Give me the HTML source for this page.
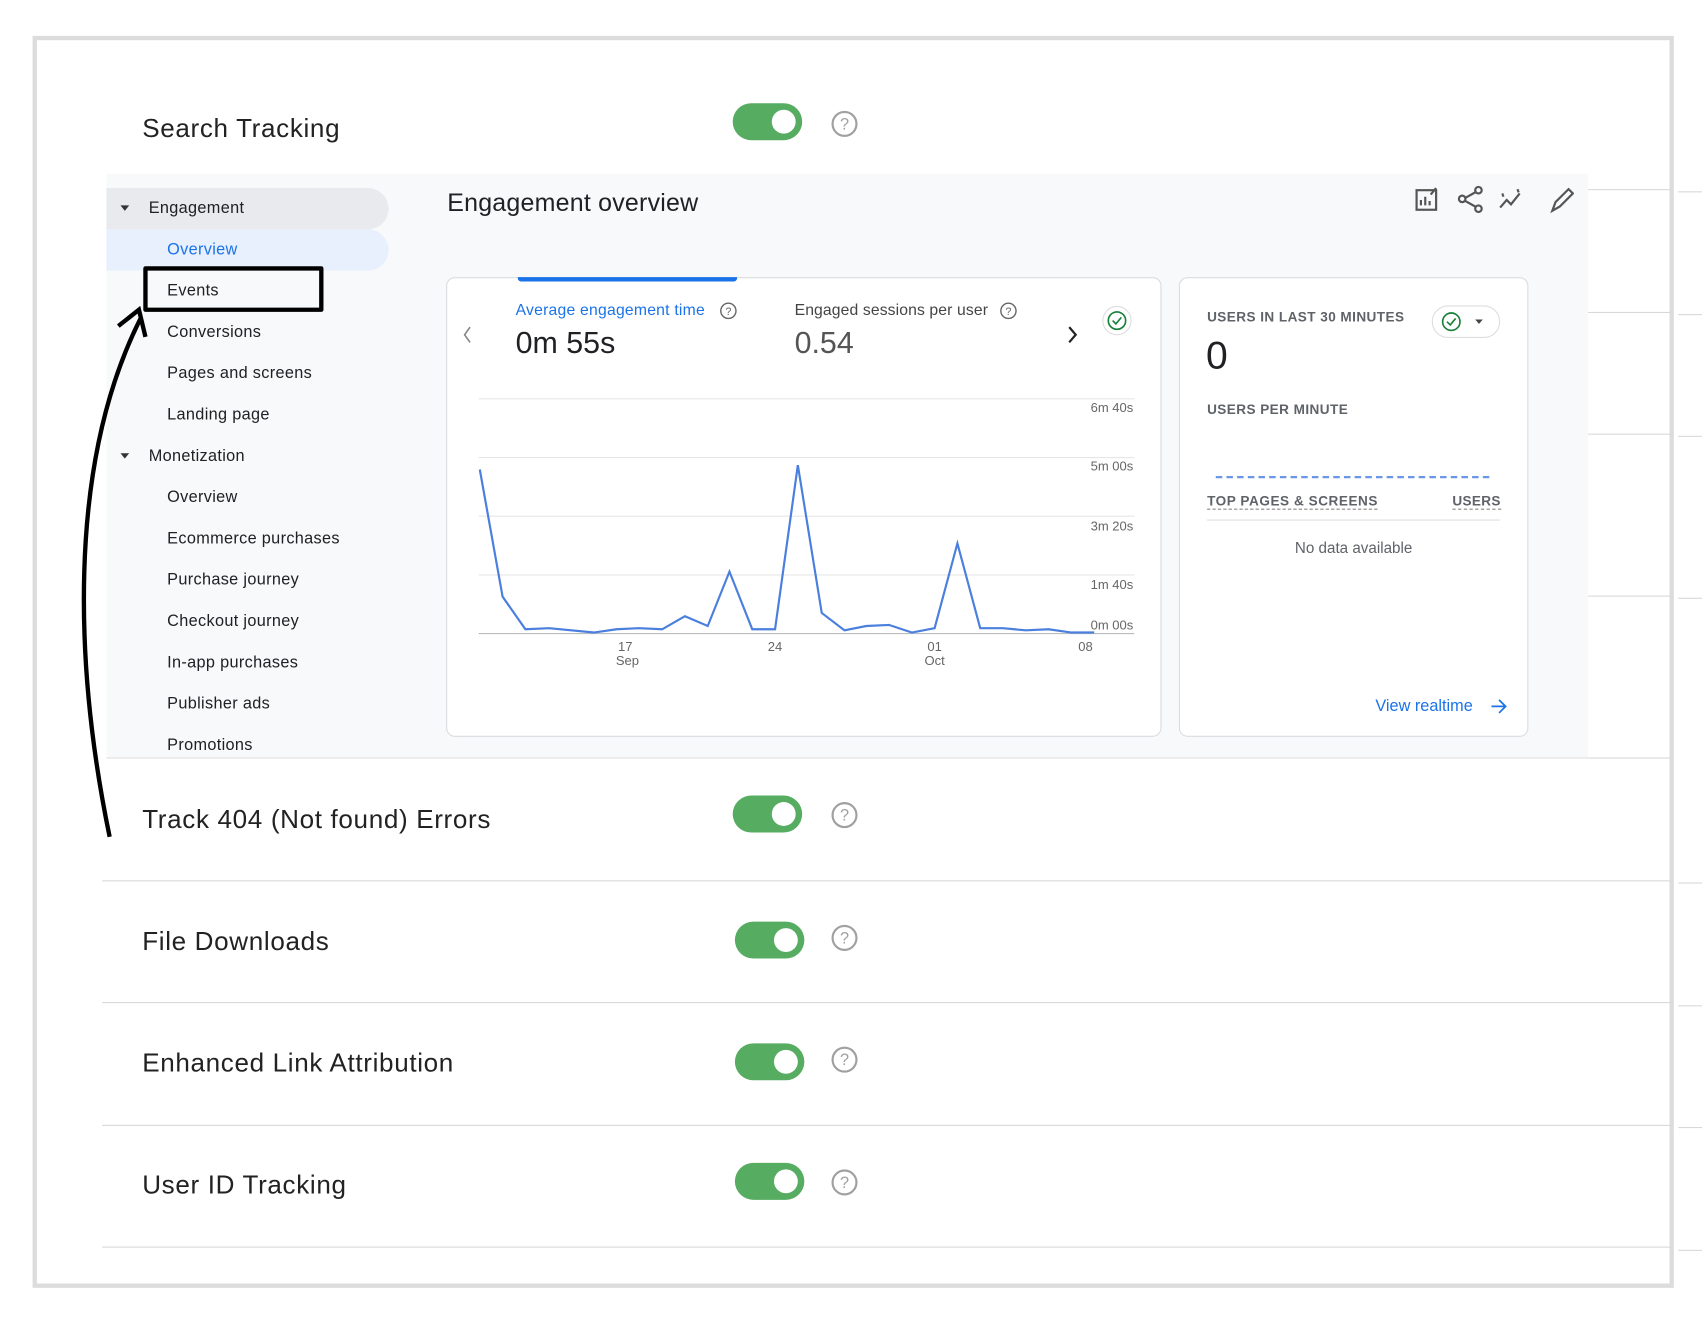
<!DOCTYPE html>
<html><head><meta charset="utf-8"><style>
html,body{margin:0;padding:0;background:#fff;width:1702px;height:1327px;overflow:hidden}
#w{position:absolute;left:0;top:0;width:1568px;height:1222px;transform:scale(1.0855,1.0868);transform-origin:0 0;font-family:"Liberation Sans",sans-serif}
.a{position:absolute}
.lbl{position:absolute;left:131px;font-size:24px;color:#222;letter-spacing:0.6px}
.tg{position:absolute;width:64px;height:34px;border-radius:17px;background:#56ac60}
.tg:after{content:"";position:absolute;right:6px;top:6px;width:22px;height:22px;border-radius:50%;background:#fff}
.hl{position:absolute;height:1px;background:#d8d8d8}
.side{position:absolute;font-size:15px;color:#202124;letter-spacing:0.3px}
</style></head><body><div id="w">
<div class="a" style="left:30px;top:33px;width:1504px;height:1144px;border:4px solid #dcdcdc"></div>
<div class="hl" style="left:94px;top:810px;width:1446px"></div>
<div class="hl" style="left:94px;top:922px;width:1446px"></div>
<div class="hl" style="left:94px;top:1035px;width:1446px"></div>
<div class="hl" style="left:94px;top:1147px;width:1446px"></div>
<div class="hl" style="left:1463px;top:174px;width:77px"></div>
<div class="hl" style="left:1463px;top:287px;width:77px"></div>
<div class="hl" style="left:1463px;top:399px;width:77px"></div>
<div class="hl" style="left:1463px;top:548px;width:77px"></div>
<div class="hl" style="left:1463px;top:697px;width:77px"></div>
<div class="hl" style="left:1546px;top:176px;width:22px"></div>
<div class="hl" style="left:1546px;top:289px;width:22px"></div>
<div class="hl" style="left:1546px;top:401px;width:22px"></div>
<div class="hl" style="left:1546px;top:550px;width:22px"></div>
<div class="hl" style="left:1546px;top:812px;width:22px"></div>
<div class="hl" style="left:1546px;top:925px;width:22px"></div>
<div class="hl" style="left:1546px;top:1037px;width:22px"></div>
<div class="hl" style="left:1546px;top:1150px;width:22px"></div>

<div class="lbl" style="top:105px">Search Tracking</div>
<div class="tg" style="left:675px;top:95px"></div>
<div class="lbl" style="top:741px">Track 404 (Not found) Errors</div>
<div class="tg" style="left:675px;top:732px"></div>
<div class="lbl" style="top:853px">File Downloads</div>
<div class="tg" style="left:677px;top:848px"></div>
<div class="lbl" style="top:965px">Enhanced Link Attribution</div>
<div class="tg" style="left:677px;top:960px"></div>
<div class="lbl" style="top:1077px">User ID Tracking</div>
<div class="tg" style="left:677px;top:1070px"></div>
<svg class="a" style="left:0;top:0" width="1568" height="1222">
<g fill="none" stroke="#a0a0a0" stroke-width="2">
<circle cx="778" cy="114" r="11"/><circle cx="778" cy="750" r="11"/><circle cx="778" cy="863" r="11"/><circle cx="778" cy="975" r="11"/><circle cx="778" cy="1088" r="11"/>
</g>
<g fill="#a0a0a0" font-size="15" text-anchor="middle" font-family="Liberation Sans"><text x="778" y="119">?</text><text x="778" y="755">?</text><text x="778" y="868">?</text><text x="778" y="980">?</text><text x="778" y="1093">?</text></g>
</svg>

<div class="a" style="left:98px;top:160px;width:1365px;height:537px;background:#f8f9fa;border-bottom:1px solid #e0e0e0"></div>
<div class="a" style="left:98px;top:173px;width:260px;height:38px;background:#e8eaed;border-radius:0 19px 19px 0"></div>
<div class="a" style="left:98px;top:211px;width:260px;height:38px;background:#e8f0fe;border-radius:0 19px 19px 0"></div>
<div class="a" style="left:111px;top:189px;border:4px solid transparent;border-top:5px solid #333"></div>
<div class="a" style="left:111px;top:417px;border:4px solid transparent;border-top:5px solid #333"></div>
<div class="side" style="left:137px;top:183px">Engagement</div>
<div class="side" style="left:154px;top:221px;color:#1a73e8">Overview</div>
<div class="side" style="left:154px;top:259px">Events</div>
<div class="side" style="left:154px;top:297px">Conversions</div>
<div class="side" style="left:154px;top:335px">Pages and screens</div>
<div class="side" style="left:154px;top:373px">Landing page</div>
<div class="side" style="left:137px;top:411px">Monetization</div>
<div class="side" style="left:154px;top:449px">Overview</div>
<div class="side" style="left:154px;top:487px">Ecommerce purchases</div>
<div class="side" style="left:154px;top:525px">Purchase journey</div>
<div class="side" style="left:154px;top:563px">Checkout journey</div>
<div class="side" style="left:154px;top:601px">In-app purchases</div>
<div class="side" style="left:154px;top:639px">Publisher ads</div>
<div class="side" style="left:154px;top:677px">Promotions</div>
<div class="a" style="left:132px;top:245px;width:158px;height:34px;border:4px solid #000;border-radius:2px"></div>

<div class="a" style="left:412px;top:173px;font-size:23px;color:#202124;letter-spacing:0.2px">Engagement overview</div>
<svg class="a" style="left:1300px;top:170px" width="150" height="28" fill="none" stroke="#555" stroke-width="2">
<rect x="5" y="5" width="18" height="18"/><path d="M9 19v-5M13 19v-8M17 19v-4M18 9l5-6"/>
<circle cx="62" cy="5" r="3"/><circle cx="47" cy="13" r="3"/><circle cx="62" cy="22" r="3"/><path d="M50 12l9-5M50 15l9 5"/>
<path d="M82 21l6-7 4 4 8-10M84 8l1 3M98 4l1 3"/>
<path d="M130 24l3-8 12-12 4 4-12 12z"/>
</svg>

<div class="a" style="left:411px;top:255px;width:657px;height:421px;background:#fff;border:1px solid #dadce0;border-radius:8px"></div>
<div class="a" style="left:477px;top:255px;width:202px;height:4px;background:#1a73e8;border-radius:0 0 3px 3px"></div>
<div class="a" style="left:475px;top:278px;font-size:14.5px;color:#1a73e8;letter-spacing:0.2px">Average engagement time</div>
<div class="a" style="left:475px;top:300px;font-size:28px;color:#202124">0m 55s</div>
<div class="a" style="left:732px;top:278px;font-size:14.5px;color:#444;letter-spacing:0.1px">Engaged sessions per user</div>
<div class="a" style="left:732px;top:300px;font-size:28px;color:#555">0.54</div>
<svg class="a" style="left:411px;top:255px" width="660" height="420">
<g fill="none" stroke="#666" stroke-width="1.3"><circle cx="260" cy="31" r="7"/><circle cx="518" cy="31" r="7"/></g>
<g font-size="10" fill="#666" text-anchor="middle" font-family="Liberation Sans"><text x="260" y="35">?</text><text x="518" y="35">?</text></g>
<path d="M22 46l-5 7 5 7" stroke="#888" stroke-width="1.5" fill="none"/>
<path d="M574 46l6 7-6 7" stroke="#222" stroke-width="2" fill="none"/>
<circle cx="618" cy="40" r="13" fill="#fff" stroke="#ddd"/><circle cx="618" cy="40" r="8" fill="none" stroke="#188038" stroke-width="1.5"/><path d="M614 40l3 3 5-6" stroke="#188038" stroke-width="1.5" fill="none"/>
<g stroke="#e6e6e6"><path d="M30 112H634M30 166H634M30 220H634M30 274H634"/><path d="M30 328H634" stroke="#bbb"/></g>
<g font-size="12" fill="#666" font-family="Liberation Sans" text-anchor="end"><text x="633" y="124">6m 40s</text><text x="633" y="178">5m 00s</text><text x="633" y="233">3m 20s</text><text x="633" y="287">1m 40s</text><text x="633" y="324">0m 00s</text></g>
<g font-size="12" fill="#666" font-family="Liberation Sans" text-anchor="middle"><text x="165" y="344">17</text><text x="167" y="357">Sep</text><text x="303" y="344">24</text><text x="450" y="344">01</text><text x="450" y="357">Oct</text><text x="589" y="344">08</text></g>
<polyline fill="none" stroke="#4a7fde" stroke-width="2" points="31,177 52,294 73,324 95,323 136,327 157,324 178,323 199,324 220,312 241,321 261,271 282,324 303,324 324,173 346,309 367,325 387,321 408,320 429,327 450,323 471,245 492,323 513,323 534,325 555,324 576,327 597,327"/>
</svg>

<div class="a" style="left:1086px;top:255px;width:320px;height:421px;background:#fff;border:1px solid #dadce0;border-radius:8px"></div>
<div class="a" style="left:1112px;top:285px;font-size:12.5px;color:#5f6368;font-weight:bold;letter-spacing:0.4px">USERS IN LAST 30 MINUTES</div>
<div class="a" style="left:1319px;top:281px;width:61px;height:28px;border:1px solid #ddd;border-radius:15px;background:#fff"></div>
<svg class="a" style="left:1320px;top:282px" width="60" height="28"><circle cx="17" cy="14" r="8" fill="none" stroke="#188038" stroke-width="1.5"/><path d="M13 14l3 3 5-6" stroke="#188038" stroke-width="1.5" fill="none"/><path d="M39 12h7l-3.5 4z" fill="#444"/></svg>
<div class="a" style="left:1111px;top:306px;font-size:36px;color:#202124">0</div>
<div class="a" style="left:1112px;top:370px;font-size:12.5px;color:#5f6368;font-weight:bold;letter-spacing:0.4px">USERS PER MINUTE</div>
<div class="a" style="left:1120px;top:438px;width:252px;border-top:2px dashed #6b95e8"></div>
<div class="a" style="left:1112px;top:454px;font-size:12.5px;color:#5f6368;font-weight:bold;letter-spacing:0.5px;border-bottom:1px dashed #888">TOP PAGES &amp; SCREENS</div>
<div class="a" style="left:1338px;top:454px;font-size:12.5px;color:#5f6368;font-weight:bold;letter-spacing:0.3px;border-bottom:1px dashed #888">USERS</div>
<div class="a" style="left:1112px;top:478px;width:270px;height:1px;background:#ddd"></div>
<div class="a" style="left:1112px;top:496px;width:270px;text-align:center;font-size:14px;color:#5f6368">No data available</div>
<div class="a" style="left:1267px;top:641px;font-size:15px;color:#1a73e8">View realtime</div>
<svg class="a" style="left:1372px;top:642px" width="18" height="16"><path d="M2 8h13M9 2l6 6-6 6" stroke="#1a73e8" stroke-width="1.6" fill="none"/></svg>

<svg class="a" style="left:0;top:0" width="300" height="800"><path d="M101 770C70 620 60 430 130 292" fill="none" stroke="#000" stroke-width="4"/><path d="M109 300L128 285L134 310" fill="none" stroke="#000" stroke-width="4"/></svg>
</div></body></html>
